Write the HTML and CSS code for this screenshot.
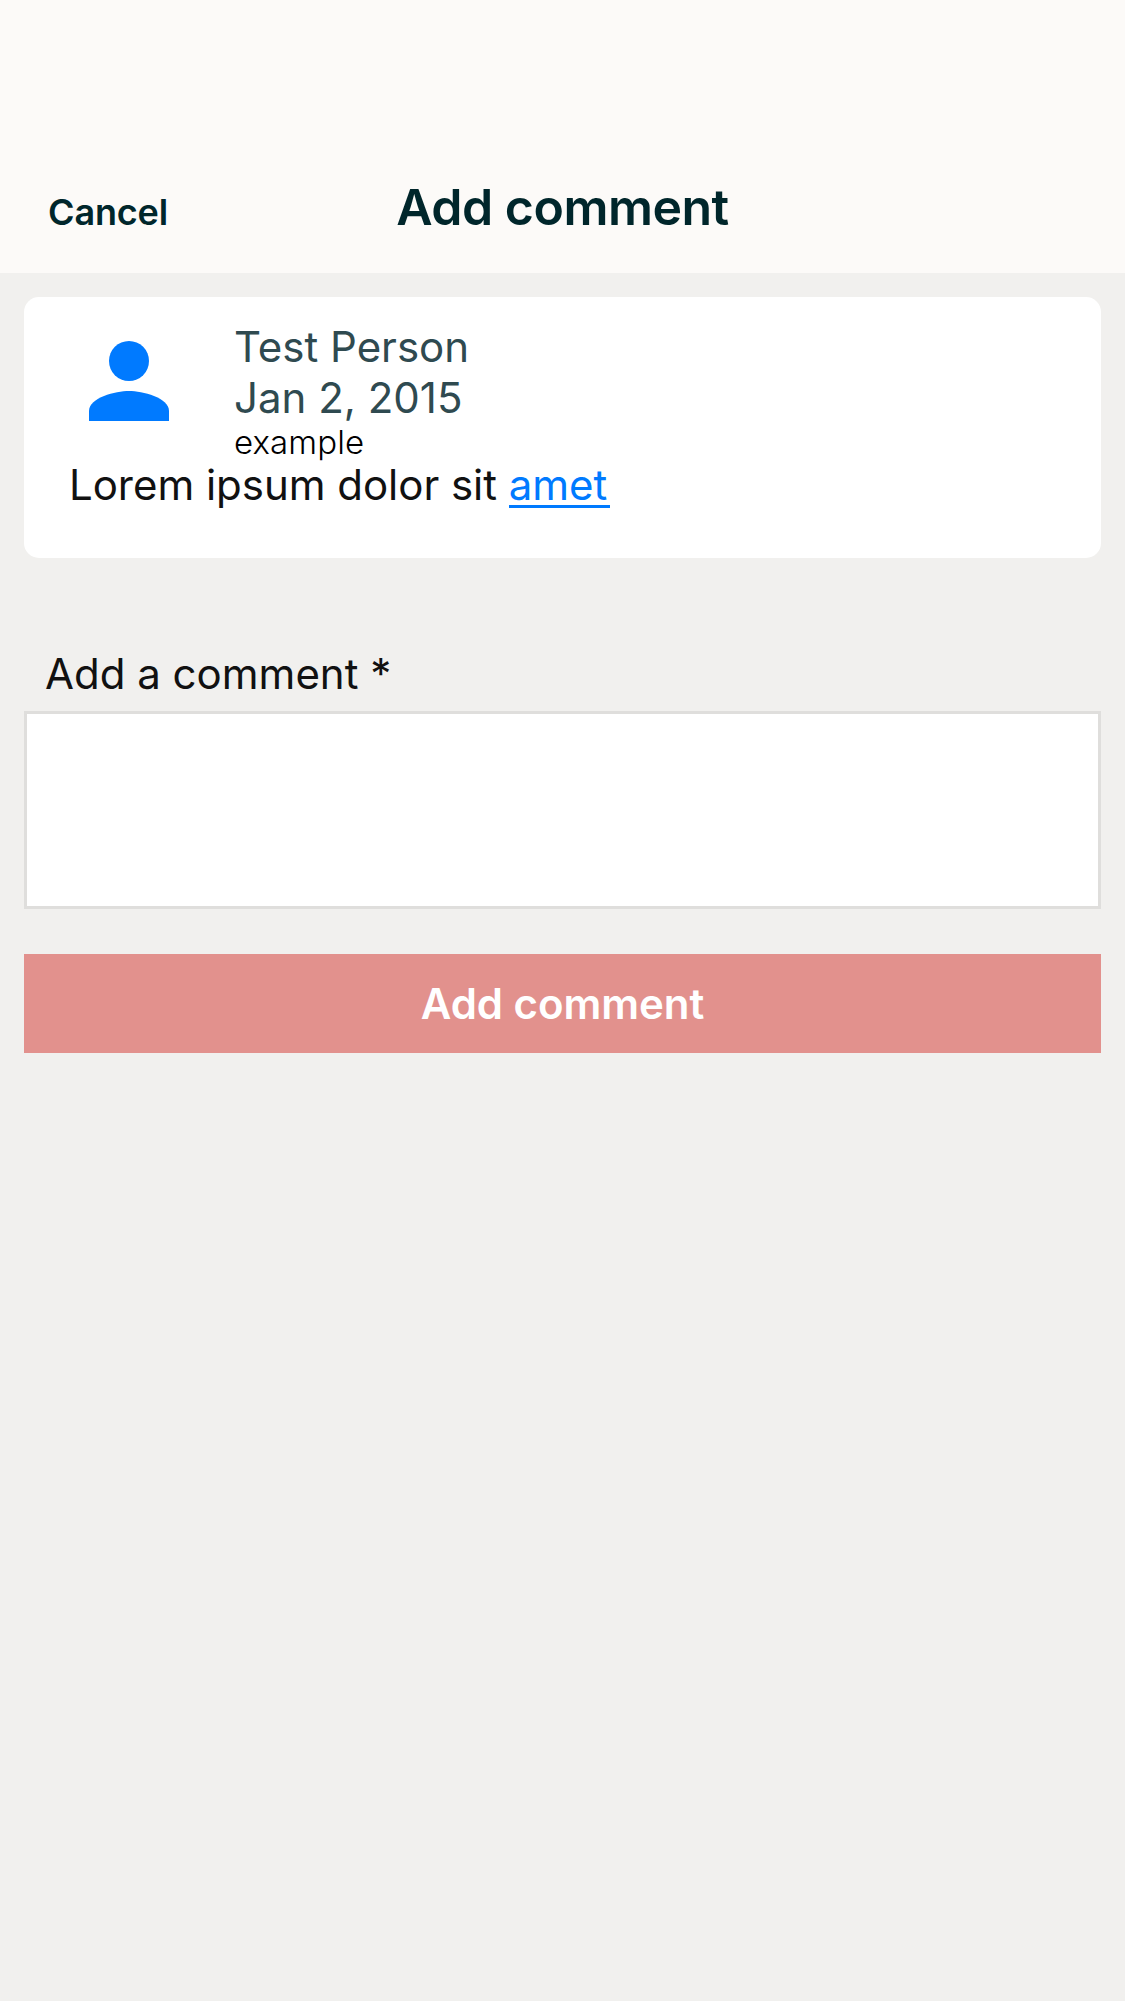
FILE: index.html
```html
<!DOCTYPE html>
<html lang="en">
<head>
<meta charset="utf-8">
<title>Add comment</title>
<link rel="stylesheet" href="styles.css">
</head>
<body>
<header class="header">
  <button class="cancel" type="button">Cancel</button>
  <h1 class="title">Add comment</h1>
</header>
<main class="content">
  <article class="card">
    <div class="author">
      <svg class="avatar" viewBox="0 0 24 24" aria-hidden="true"><circle cx="12" cy="8" r="4"/><path d="M12 14c-2.67 0-8 1.34-8 4v2h16v-2c0-2.66-5.33-4-8-4z"/></svg>
      <div class="meta">
        <div class="name">Test Person</div>
        <div class="date">Jan 2, 2015</div>
        <div class="tag">example</div>
      </div>
    </div>
    <p class="body">Lorem ipsum dolor sit <a class="link" href="#">amet</a></p>
  </article>
  <label class="label" for="comment">Add a comment *</label>
  <textarea class="input" id="comment"></textarea>
  <button class="submit" type="button">Add comment</button>
</main>
</body>
</html>
```
FILE: styles.css
```css
* { box-sizing: border-box; }
body {
  margin: 0;
  min-height: 2001px;
  background: #f1f0ee;
  color: #111;
  font: 400 42px/51px Inter, sans-serif;
}
button { border: 0; padding: 0; font-family: inherit; }
.header {
  display: grid;
  grid-template-columns: 1fr auto 1fr;
  align-items: baseline;
  height: 273px;
  padding: 177px 48px 0;
  background: #fcfaf8;
  color: #00262b;
}
.cancel {
  justify-self: start;
  background: none;
  color: inherit;
  font-size: 36px;
  line-height: 44px;
  font-weight: 600;
  letter-spacing: -.15px;
}
.title {
  margin: 0;
  font-size: 50px;
  line-height: 61px;
  font-weight: 600;
  letter-spacing: -.5px;
}
.content {
  display: flex;
  flex-direction: column;
  padding: 24px 24px 0;
}
.card {
  height: 261px;
  padding: 24px 45px;
  border-radius: 15px;
  background: #fff;
}
.author { display: flex; gap: 45px; }
.avatar { width: 120px; height: 120px; fill: #007aff; }
.name, .date { color: #2f4a50; }
.tag {
  padding-top: 3px;
  color: #000;
  font-size: 33px;
  line-height: 33px;
  font-weight: 300;
  letter-spacing: .1px;
}
.body { margin: 0; letter-spacing: -.03px; }
.link {
  display: inline-block;
  padding-right: 3px;
  border-bottom: 3px solid;
  color: #007aff;
  line-height: 41px;
  text-decoration: none;
}
.label { margin: 90px 0 12px 21px; }
.input {
  height: 198px;
  margin: 0 0 45px;
  padding: 12px;
  border: 3px solid #dfdedc;
  border-radius: 0;
  background: #fff;
  font: inherit;
  resize: none;
  outline: 0;
}
.submit {
  height: 99px;
  background: #e2918d;
  color: #fff;
  font-size: 42px;
  line-height: 51px;
  font-weight: 600;
  letter-spacing: -.05px;
}
```
